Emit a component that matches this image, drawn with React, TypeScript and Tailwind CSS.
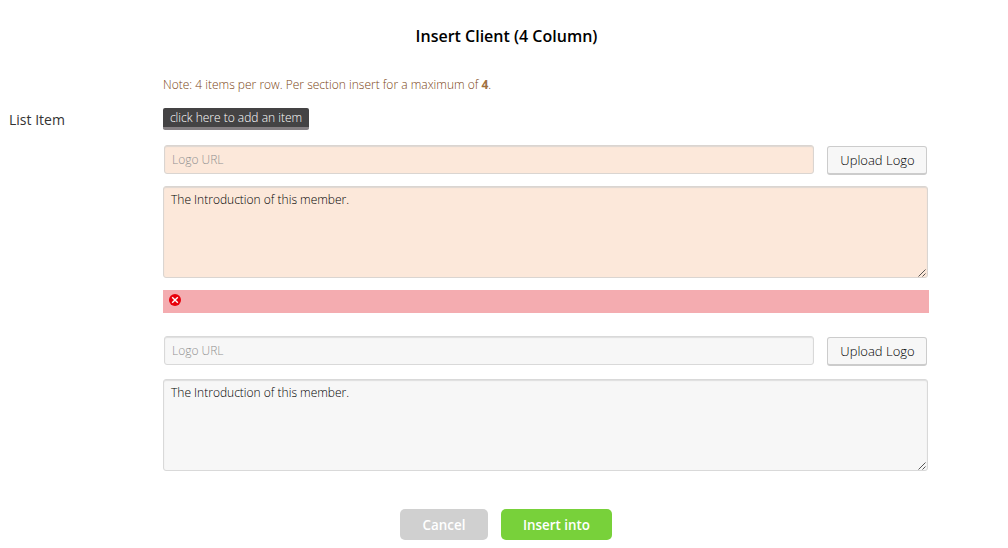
import React from "react";

function ResizeGrip() {
  return (
    <svg className="pointer-events-none absolute right-[2px] bottom-[1px] h-[8px] w-[8px]" viewBox="0 0 8 8" fill="none" stroke="#444" strokeWidth="0.9">
      <path d="M0.5 7.5L7.5 0.5M4.5 7.5L7.5 4.5" />
    </svg>
  );
}

type LogoItemProps = { tone: string; gap: string };

function LogoItem({ tone, gap }: LogoItemProps) {
  return (
    <div className="flex w-[765px] flex-col">
      <div className="flex h-[30px] items-start pl-px">
        <input
          placeholder="Logo URL"
          className={`h-[29px] w-[650px] rounded-[3px] border px-[7px] text-[12px] font-light outline-none placeholder:text-[#929292] placeholder:opacity-100 ${tone}`}
        />
        <button className="mt-px ml-[13px] h-[29px] w-[100px] rounded-[3px] border border-b-2 border-[#cccccc] bg-[#f7f7f7] pl-px text-[13px] leading-[26px] font-light text-black">
          Upload Logo
        </button>
      </div>
      <div className={`relative h-[92px] ${gap}`}>
        <textarea
          defaultValue="The Introduction of this member."
          className={`block h-full w-full resize-none overflow-hidden rounded-[3px] border px-[7px] py-[4px] text-[12px] leading-[17px] font-light text-black outline-none ${tone}`}
        />
        <ResizeGrip />
      </div>
    </div>
  );
}

export default function App() {
  return (
    <div className="flex h-[548px] w-[1008px] flex-col overflow-hidden bg-white font-['Open_Sans',sans-serif]">
      <h1 className="mt-[24px] h-[24px] pl-[5px] text-center text-[16px] leading-[24px] font-semibold text-black">
        Insert Client (4 Column)
      </h1>
      <div className="mt-[28px] flex h-[395px]">
        <div className="w-[163px] shrink-0 pt-[34px] pl-[9px] text-[14px] leading-[20px] text-[#333]">List Item</div>
        <div className="flex w-[766px] flex-col items-start">
          <p className="h-[18px] text-[12px] leading-[18px] font-light text-[#7a3f12]">
            Note: 4 items per row. Per section insert for a maximum of <b className="font-bold text-[#a0703f]">4</b>.
          </p>
          <button className="mt-[14px] h-[22px] w-[146px] rounded-[2px] border-b-[3px] border-[#858083] bg-[#444344] text-[12px] leading-[19px] font-light text-white">
            click here to add an item
          </button>
          <div className="mt-[15px]">
            <LogoItem tone="bg-[#fce8da] border-[#dad5d1] shadow-[inset_0_1px_1px_#ded7d2]" gap="mt-[11px]" />
          </div>
          <div className="mt-[12px] flex h-[23px] w-full items-start bg-[#f4acb0] pt-[4px] pl-[6px]">
            <svg className="h-[12px] w-[12px]" viewBox="0 0 12 12">
              <circle cx="6" cy="6" r="6" fill="#e8000b" />
              <path d="M3.2 3.2L8.8 8.8M8.8 3.2L3.2 8.8" stroke="#fff" strokeWidth="1.4" />
            </svg>
          </div>
          <div className="mt-[23px]">
            <LogoItem tone="bg-[#f7f7f7] border-[#d9d9d9] shadow-[inset_0_1px_1px_#dedede]" gap="mt-[13px]" />
          </div>
        </div>
      </div>
      <div className="mt-[38px] flex gap-[13px] pl-[400px] text-[13.4px] font-semibold text-white">
        <button className="h-[31px] w-[88px] rounded-[5px] bg-[#d0d0d0] pt-[2px]">Cancel</button>
        <button className="h-[31px] w-[111px] rounded-[5px] bg-[#78d13a] pt-[2px]">Insert into</button>
      </div>
    </div>
  );
}
